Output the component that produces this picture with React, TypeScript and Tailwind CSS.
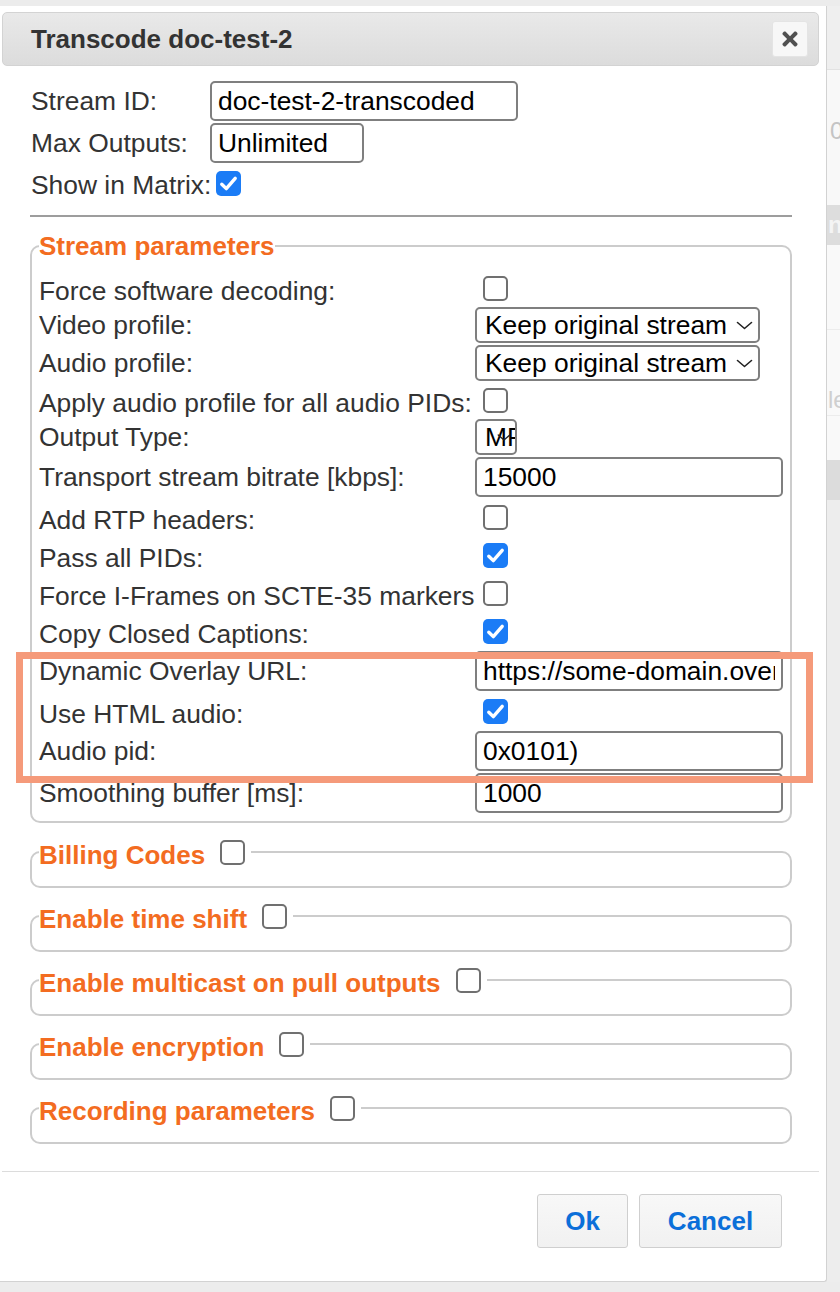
import React from "react";
import { FaTimes } from "react-icons/fa";

function Box({ checked, className = "" }: { checked?: boolean; className?: string }) {
  if (checked) {
    return (
      <span className={"inline-flex shrink-0 w-[25px] h-[25px] rounded-[5px] bg-[#1b7cf6] items-center justify-center " + className}>
        <svg width="25" height="25" viewBox="0 0 25 25">
          <path d="M5.8 13.2 L10.3 17.6 L19.2 7.4" fill="none" stroke="white" strokeWidth="3.4" strokeLinecap="round" strokeLinejoin="round" />
        </svg>
      </span>
    );
  }
  return <span className={"inline-block shrink-0 w-[25px] h-[25px] rounded-[5px] border-2 border-[#707070] bg-white " + className} />;
}

function Chevron({ className = "" }: { className?: string }) {
  return (
    <svg className={className} width="17" height="9" viewBox="0 0 17 9">
      <path d="M1.5 1.5 L8.5 7.5 L15.5 1.5" fill="none" stroke="#222" strokeWidth="1.6" strokeLinecap="round" strokeLinejoin="round" />
    </svg>
  );
}

function Select({ text }: { text: string }) {
  return (
    <div className="relative flex items-center h-[36px] w-[285px] border-2 border-[#7f7f7f] rounded-[5px] pl-[8px] text-black whitespace-nowrap overflow-hidden bg-white">
      <span>{text}</span>
      <Chevron className="absolute right-[5px] top-[12px]" />
    </div>
  );
}

function TextInput({ value, w = "w-[308px]" }: { value: string; w?: string }) {
  return (
    <input
      readOnly
      value={value}
      className={"block h-[40px] border-2 border-[#7f7f7f] rounded-[5px] px-[6px] text-black bg-white outline-none " + w}
    />
  );
}

type Row = { label: string; h: string; kind: "cb" | "cbx" | "select" | "input" | "mp"; value?: string };

const rows: Row[] = [
  { label: "Force software decoding:", h: "h-[36px]", kind: "cb" },
  { label: "Video profile:", h: "h-[38px]", kind: "select", value: "Keep original stream" },
  { label: "Audio profile:", h: "h-[38px]", kind: "select", value: "Keep original stream" },
  { label: "Apply audio profile for all audio PIDs:", h: "h-[36px]", kind: "cb" },
  { label: "Output Type:", h: "h-[38px]", kind: "mp" },
  { label: "Transport stream bitrate [kbps]:", h: "h-[42px]", kind: "input", value: "15000" },
  { label: "Add RTP headers:", h: "h-[38px]", kind: "cb" },
  { label: "Pass all PIDs:", h: "h-[38px]", kind: "cbx" },
  { label: "Force I-Frames on SCTE-35 markers", h: "h-[38px]", kind: "cb" },
  { label: "Copy Closed Captions:", h: "h-[38px]", kind: "cbx" },
  { label: "Dynamic Overlay URL:", h: "h-[42px]", kind: "input", value: "https://some-domain.overlay.example.com/overlay.html" },
  { label: "Use HTML audio:", h: "h-[38px]", kind: "cbx" },
  { label: "Audio pid:", h: "h-[42px]", kind: "input", value: "0x0101)" },
  { label: "Smoothing buffer [ms]:", h: "h-[42px]", kind: "input", value: "1000" },
];

function Collapsed({ title, className = "" }: { title: string; className?: string }) {
  return (
    <fieldset className={"border-2 border-[#cccccc] rounded-[10px] px-[7px] pb-[16px] " + className}>
      <legend className="p-0">
        <span className="inline-flex items-center h-[36px]">
          <span className="pt-[6px] font-bold text-[26px] text-[#f36c21]">{title}</span>
          <span className="w-[7px]" />
          <Box className="ml-[8px] mr-[6px]" />
        </span>
      </legend>
    </fieldset>
  );
}

export default function App() {
  return (
    <div className="relative min-h-[1292px] bg-[#ececec] font-['Liberation_Sans',Arial,sans-serif] text-[26.4px] leading-[30px] text-[#333] overflow-hidden">
      <div className="flex pt-[6px]">
        {/* Dialog */}
        <div className="w-[827px] shrink-0 bg-white border-r border-b border-[#d2d2d2] rounded-br-[3px] pt-[6px] pb-[33px]">
          {/* Title bar */}
          <div className="ml-[2px] mr-[7px] h-[54px] flex items-center justify-between rounded-[5px] border border-[#d3d3d3] bg-linear-to-b from-[#e9e9e9] to-[#dcdcdc] pl-[28px] pr-[10px]">
            <span className="font-bold text-[26px] text-[#333]">Transcode doc-test-2</span>
            <div className="w-[36px] h-[36px] flex items-center justify-center bg-[#f7f7f7] border border-[#e4e4e4] rounded-[3px]">
              <FaTimes size={22} color="#505050" />
            </div>
          </div>

          {/* Body */}
          <div className="pl-[30px] pr-[34px] pt-[14px]">
            <div className="pl-[1px]">
              <div className="flex items-center h-[42px]">
                <span className="w-[179px] shrink-0">Stream ID:</span>
                <TextInput value="doc-test-2-transcoded" w="w-[308px]" />
              </div>
              <div className="flex items-center h-[42px]">
                <span className="w-[179px] shrink-0">Max Outputs:</span>
                <TextInput value="Unlimited" w="w-[154px]" />
              </div>
              <div className="flex items-center h-[38px]">
                <span className="w-[179px] shrink-0 pt-[4px] whitespace-nowrap">Show in Matrix:</span>
                <Box checked className="ml-[6px]" />
              </div>
            </div>

            <div className="mt-[13px] h-[2px] bg-[#9d9d9d]" />

            <fieldset className="mt-[14px] border-2 border-[#cccccc] rounded-[10px] px-[7px] pt-[9px] pb-[7px]">
              <legend className="p-0 font-bold text-[26px] text-[#f36c21]">Stream parameters</legend>
              {rows.map((r, i) => (
                <div key={i} className={"flex items-center " + r.h}>
                  <span className={"w-[436px] shrink-0 whitespace-nowrap " + (r.kind === "cb" || r.kind === "cbx" ? "pt-[6px]" : "")}>
                    {r.label}
                  </span>
                  {r.kind === "cb" && <Box className="ml-[8px]" />}
                  {r.kind === "cbx" && <Box checked className="ml-[8px]" />}
                  {r.kind === "select" && <Select text={r.value || ""} />}
                  {r.kind === "input" && <TextInput value={r.value || ""} />}
                  {r.kind === "mp" && (
                    <div className="relative flex items-center h-[36px] w-[42px] border-2 border-[#7f7f7f] rounded-[5px] pl-[8px] text-black whitespace-nowrap overflow-hidden bg-white">
                      <span>MP</span>
                      <Chevron className="absolute right-[4px] top-[12px] w-[14px]" />
                    </div>
                  )}
                </div>
              ))}
            </fieldset>

            <Collapsed title="Billing Codes" className="mt-[11px]" />
            <Collapsed title="Enable time shift" className="mt-[10px]" />
            <Collapsed title="Enable multicast on pull outputs" className="mt-[10px]" />
            <Collapsed title="Enable encryption" className="mt-[10px]" />
            <Collapsed title="Recording parameters" className="mt-[10px]" />
          </div>

          {/* Footer */}
          <div className="ml-[2px] mr-[7px] mt-[27px] border-t border-[#dcdcdc] pt-[22px] pr-[37px] flex justify-end gap-[11px]">
            <button className="w-[91px] h-[54px] rounded-[3px] border border-[#cfcfcf] bg-linear-to-b from-[#f8f8f8] to-[#f1f1f1] font-bold text-[26px] text-[#0b6fd9]">
              Ok
            </button>
            <button className="w-[143px] h-[54px] rounded-[3px] border border-[#cfcfcf] bg-linear-to-b from-[#f8f8f8] to-[#f1f1f1] font-bold text-[26px] text-[#0b6fd9]">
              Cancel
            </button>
          </div>
        </div>

        {/* Page behind */}
        <div className="flex-1 flex flex-col overflow-hidden text-[24px]">
          <div className="h-[64px] bg-[#efefef] border-b border-[#e2e2e2]" />
          <div className="h-[135px] bg-[#f8f8f8] flex items-center pl-[3px] text-[#c4c4c4] pb-[14px]">0</div>
          <div className="h-[40px] bg-[#dddddd] flex items-center pl-[1px] font-bold text-[#f4f4f4] whitespace-nowrap">nt</div>
          <div className="h-[85px] bg-[#f9f9f9] border-b border-[#ececec]" />
          <div className="h-[85px] bg-[#f9f9f9] flex items-end pl-[1px] text-[#cfcfcf] whitespace-nowrap">le</div>
          <div className="h-[45px] bg-[#f9f9f9] border-t border-[#ececec]" />
          <div className="h-[40px] bg-[#dcdcdc]" />
          <div className="flex-1 bg-[#ededed]" />
        </div>
      </div>

      {/* Annotation highlight */}
      <div className="absolute left-[16px] top-[652px] w-[797px] h-[131px] border-[7px] border-[#f59a7a] pointer-events-none" />
    </div>
  );
}
